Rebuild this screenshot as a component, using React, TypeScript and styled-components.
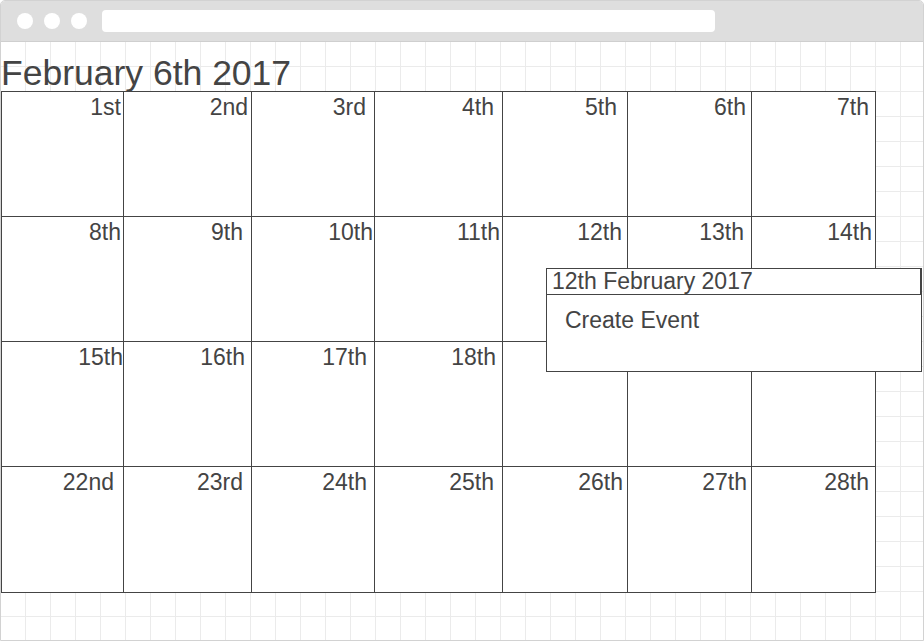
import React from 'react';
import styled, { createGlobalStyle } from 'styled-components';

const GlobalStyle = createGlobalStyle`
  html, body {
    margin: 0;
    padding: 0;
    background: #ffffff;
  }
  * {
    box-sizing: border-box;
  }
`;

const COLUMN_WIDTHS = [122, 128, 123, 128, 125, 124, 124];
const ROW_HEIGHTS = [125, 125, 125, 126];

// right inset of each day label, as placed on the wireframe
const LABEL_INSETS = [
  2, 3, 8, 8, 10, 5, 6,
  2, 8, 1, 2, 5, 7, 3,
  0, 6, 7, 6, 5, 5, 5,
  9, 8, 7, 8, 4, 4, 6,
];

const ordinal = (n: number) => {
  if (n % 100 >= 11 && n % 100 <= 13) return `${n}th`;
  if (n % 10 === 1) return `${n}st`;
  if (n % 10 === 2) return `${n}nd`;
  if (n % 10 === 3) return `${n}rd`;
  return `${n}th`;
};

const days = Array.from({ length: 28 }, (_, i) => i + 1);

const App = () => {
  return (
    <>
      <GlobalStyle />
      <BrowserWindow>
        <TopBar>
          <Dot />
          <Dot />
          <Dot />
          <UrlBar />
        </TopBar>
        <Canvas>
          <Title>February 6th 2017</Title>
          <CalendarArea>
            <MonthGrid
              $columns={COLUMN_WIDTHS.map((w) => `${w}px`).join(' ')}
              $rows={ROW_HEIGHTS.map((h) => `${h}px`).join(' ')}
            >
              {days.map((day) => (
                <DayCell key={day} $inset={LABEL_INSETS[day - 1]}>
                  {ordinal(day)}
                </DayCell>
              ))}
            </MonthGrid>
            <Popover>
              <PopoverHeader>12th February 2017</PopoverHeader>
              <PopoverBody>
                <ActionItem>Create Event</ActionItem>
              </PopoverBody>
            </Popover>
          </CalendarArea>
        </Canvas>
      </BrowserWindow>
    </>
  );
};

export default App;

const BrowserWindow = styled.div`
  width: 924px;
  height: 641px;
  border: 1px solid #d2d2d2;
  border-radius: 5px 5px 0 0;
  overflow: hidden;
  display: flex;
  flex-direction: column;
  font-family: 'Liberation Sans', Arial, sans-serif;
  color: #444444;
`;

const TopBar = styled.div`
  height: 41px;
  flex: none;
  background: #dedede;
  border-bottom: 1px solid #cfcfcf;
  display: flex;
  align-items: center;
  padding: 0 0 0 16px;
  gap: 11px;
`;

const Dot = styled.span`
  width: 16px;
  height: 16px;
  border-radius: 50%;
  background: #ffffff;
  flex: none;
`;

const UrlBar = styled.div`
  width: 613px;
  height: 22px;
  margin-left: 4px;
  border-radius: 4px;
  background: #ffffff;
`;

const Canvas = styled.div`
  flex: 1;
  background-color: #ffffff;
  background-image:
    linear-gradient(to right, transparent 24px, #ebebeb 24px),
    linear-gradient(to bottom, transparent 24px, #ebebeb 24px);
  background-size: 25px 25px;
  background-position: 0 0;
`;

const Title = styled.h1`
  margin: 0;
  padding: 13px 0 0 0;
  font-size: 35.5px;
  font-weight: normal;
  line-height: 36px;
  color: #444444;
`;

const CalendarArea = styled.div`
  position: relative;
`;

const MonthGrid = styled.div<{ $columns: string; $rows: string }>`
  display: grid;
  grid-template-columns: ${(p) => p.$columns};
  grid-template-rows: ${(p) => p.$rows};
  width: max-content;
  border-left: 1px solid #444444;
  border-top: 1px solid #444444;
  background: #ffffff;
`;

const DayCell = styled.div<{ $inset: number }>`
  border-right: 1px solid #444444;
  border-bottom: 1px solid #444444;
  padding: 2px ${(p) => p.$inset}px 0 0;
  text-align: right;
  font-size: 23px;
  line-height: 26px;
  color: #444444;
`;

const Popover = styled.div`
  position: absolute;
  left: 545px;
  top: 177px;
  width: 376px;
  height: 104px;
  background: #ffffff;
  border: 1px solid #444444;
  display: flex;
  flex-direction: column;
`;

const PopoverHeader = styled.div`
  height: 26px;
  padding: 0 0 0 5px;
  border-bottom: 1px solid #444444;
  border-right: 1px solid #444444;
  font-size: 23px;
  line-height: 25px;
  color: #444444;
  white-space: nowrap;
`;

const PopoverBody = styled.div`
  flex: 1;
  padding: 12px 18px 0;
`;

const ActionItem = styled.div`
  font-size: 23px;
  line-height: 26px;
  color: #444444;
  cursor: pointer;
`;
